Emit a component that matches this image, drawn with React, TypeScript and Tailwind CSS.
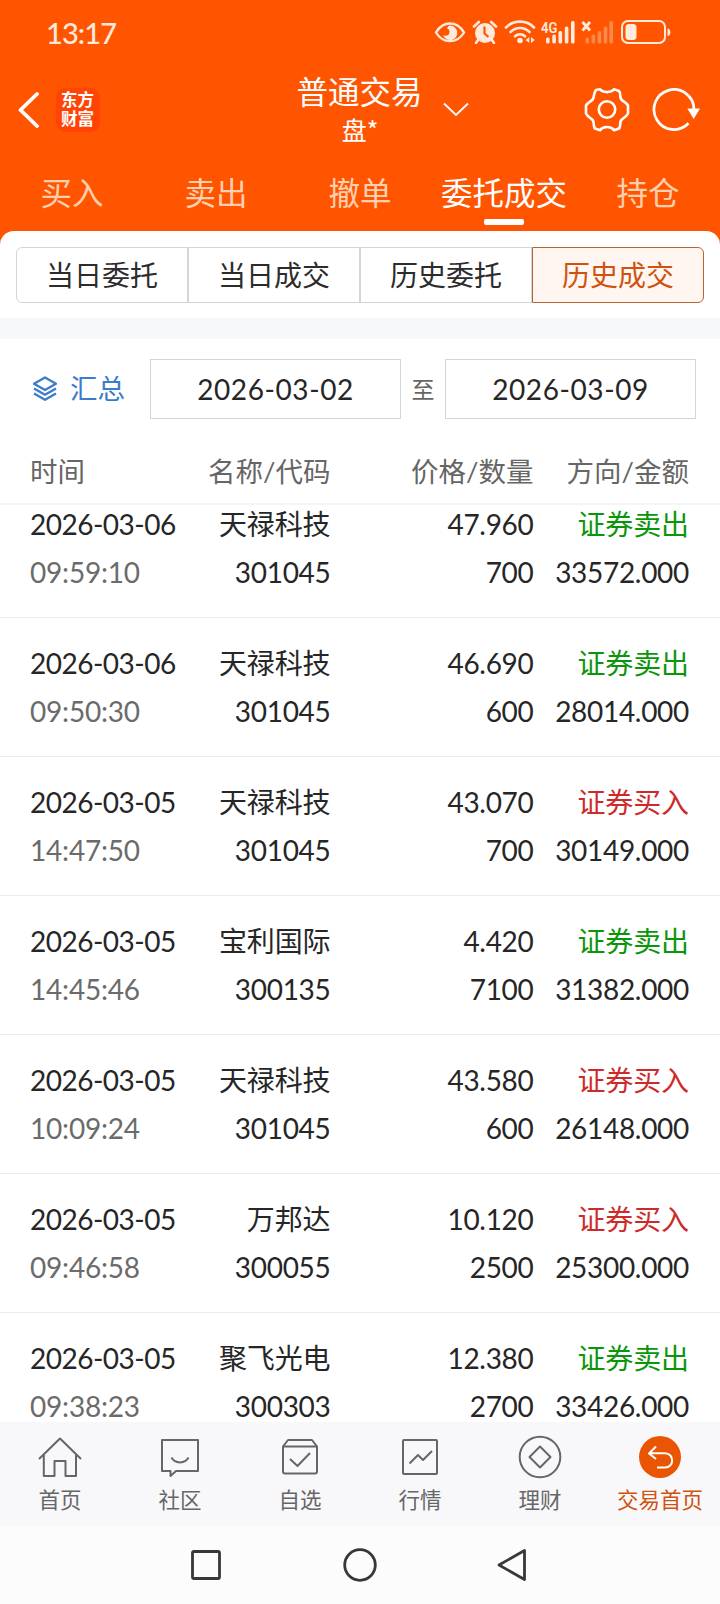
import type { ReactNode } from "react";
import clsx from "clsx";

type Trade = {
  date: string;
  time: string;
  name: string;
  code: string;
  price: string;
  qty: string;
  side: "buy" | "sell";
  amount: string;
};

const trades: Trade[] = [
  { date: "2026-03-06", time: "09:59:10", name: "天禄科技", code: "301045", price: "47.960", qty: "700", side: "sell", amount: "33572.000" },
  { date: "2026-03-06", time: "09:50:30", name: "天禄科技", code: "301045", price: "46.690", qty: "600", side: "sell", amount: "28014.000" },
  { date: "2026-03-05", time: "14:47:50", name: "天禄科技", code: "301045", price: "43.070", qty: "700", side: "buy", amount: "30149.000" },
  { date: "2026-03-05", time: "14:45:46", name: "宝利国际", code: "300135", price: "4.420", qty: "7100", side: "sell", amount: "31382.000" },
  { date: "2026-03-05", time: "10:09:24", name: "天禄科技", code: "301045", price: "43.580", qty: "600", side: "buy", amount: "26148.000" },
  { date: "2026-03-05", time: "09:46:58", name: "万邦达", code: "300055", price: "10.120", qty: "2500", side: "buy", amount: "25300.000" },
  { date: "2026-03-05", time: "09:38:23", name: "聚飞光电", code: "300303", price: "12.380", qty: "2700", side: "sell", amount: "33426.000" },
];

const topTabs = ["买入", "卖出", "撤单", "委托成交", "持仓"];
const segments = ["当日委托", "当日成交", "历史委托", "历史成交"];

export default function App() {
  return (
    <div className="flex h-[1604px] w-[720px] flex-col overflow-hidden bg-white font-['Lato','Noto_Sans_CJK_SC',sans-serif] text-[28px] leading-none text-[#262626]">
      <div className="bg-[#ff5500]">
        <StatusBar />
        <TitleBar />
        <TopTabs active="委托成交" />
        <Segments active="历史成交" />
      </div>

      <div className="h-[21px] shrink-0 bg-[#f7f8fa]" />

      <DateFilter />
      <TableHead />

      {/* 成交列表（第一行已部分滚出） */}
      <div className="min-h-0 flex-1 overflow-hidden">
        <div className="-mt-[26px]">
          {trades.map((t) => (
            <TradeRow key={t.date + t.time} trade={t} />
          ))}
        </div>
      </div>

      <BottomTabs />
      <SystemNav />
    </div>
  );
}

function StatusBar() {
  return (
    <div className="flex h-16 items-center pr-[49px] pl-[46px] text-[#ffeadd]">
      <span className="flex-1 pt-px text-[29px] font-medium tracking-[-0.9px]">13:17</span>

      {/* 护眼 */}
      <svg className="h-6 w-8" viewBox="0 0 32 24" fill="none">
        <path d="M2 12.5C9 .5 23 .5 30 12.5C23 24 9 24 2 12.5Z" stroke="currentColor" strokeWidth="2.4" />
        <path d="M16 5.5a7.3 7.3 0 1 1-7 9.5c3 2 6.5.3 6.5-3c0-2-.8-3-2.5-3.8C13.8 6.5 15 5.7 16 5.5Z" fill="currentColor" />
      </svg>

      {/* 闹钟 */}
      <svg className="ml-[6px] h-6 w-[26px]" viewBox="0 0 26 24" fill="none">
        <circle cx="13" cy="13" r="10" fill="currentColor" />
        <path d="M2 6.5L6.8 2M24 6.5L19.2 2M6 20L4 23M20 20L22 23" stroke="currentColor" strokeWidth="2.6" strokeLinecap="round" />
        <path d="M12.5 6.5V13.5L16.5 17" stroke="#ff5500" strokeWidth="2.2" />
      </svg>

      {/* WiFi */}
      <svg className="ml-[6px] h-6 w-8" viewBox="0 0 32 24" fill="none" stroke="currentColor" strokeWidth="2.6" strokeLinecap="round">
        <path d="M2 7.5C9.5-.3 22.5-.3 30 7.5M6.500 12C12 6.600 20 6.600 25.500 12M11 16.300c3-2.600 7-2.600 10 0" />
        <circle cx="16" cy="20.5" r="2.8" fill="currentColor" stroke="none" />
        <path d="M25.3 17v6l-3.800-3zM27 17v6l3.800-3z" fill="currentColor" stroke="none" />
      </svg>

      {/* 4G 信号 */}
      <svg className="ml-[5px] h-6 w-[34px]" viewBox="0 0 34 24" fill="currentColor">
        <text x="0" y="12.5" fontSize="15.5" fontWeight="600" textLength="16.5" lengthAdjust="spacingAndGlyphs" className="font-['Roboto',sans-serif]">4G</text>
        <rect x="5" y="17.5" width="3.6" height="6" rx="1.5" />
        <rect x="11.3" y="14.5" width="3.6" height="9" rx="1.5" />
        <rect x="17.5" y="11" width="3.6" height="12.5" rx="1.5" />
        <rect x="23.8" y="6.5" width="3.6" height="17" rx="1.5" />
        <rect x="30" y="1" width="3.6" height="22.5" rx="1.5" />
      </svg>

      {/* 无信号 */}
      <svg className="ml-[6px] h-6 w-8" viewBox="0 0 32 24">
        <path d="M1.5 2l7.5 8.5M9 2L1.5 10.5" stroke="currentColor" strokeWidth="2.8" />
        <g fill="currentColor" opacity=".35">
          <rect x="4.5" y="17.5" width="3.6" height="6" rx="1.5" />
          <rect x="10.5" y="14.5" width="3.6" height="9" rx="1.5" />
          <rect x="16.6" y="11" width="3.6" height="12.5" rx="1.5" />
          <rect x="22.7" y="6.5" width="3.6" height="17" rx="1.5" />
          <rect x="28.4" y="1" width="3.6" height="22.5" rx="1.5" />
        </g>
      </svg>

      {/* 电池 */}
      <svg className="ml-[8px] h-6 w-[50px]" viewBox="0 0 50 24" fill="none">
        <rect x="1" y="1" width="43" height="22" rx="6" stroke="currentColor" strokeWidth="2" />
        <rect x="4.5" y="4" width="11" height="16" rx="3.5" fill="currentColor" />
        <path d="M46.5 8.5c3.8 0 3.8 7.5 0 7.5z" fill="currentColor" />
      </svg>
    </div>
  );
}

function TitleBar() {
  return (
    <div className="grid h-[92px] grid-cols-[1fr_auto_1fr] text-white">
      <div className="flex items-center pl-[17px]">
        <svg className="h-[38px] w-[22px]" viewBox="0 0 22 38" fill="none" stroke="currentColor" strokeWidth="3.8" strokeLinecap="round" strokeLinejoin="round">
          <path d="M20 3L3.500 19L20 35" />
        </svg>
        <div className="ml-[17px] flex size-[44px] flex-col items-center justify-center rounded-[9px] bg-[#ff4405] pr-px text-[16.5px] leading-[19.5px] font-bold">
          <span>东方</span>
          <span>财富</span>
        </div>
      </div>

      <div className="relative flex w-32 flex-col items-center pt-[11px]">
        <span className="-ml-px text-[31.5px] leading-[34px] whitespace-nowrap">普通交易</span>
        <span className="mt-[6px] text-[25px] leading-[28px]">
          盘<span className="font-['Noto_Sans_CJK_SC',sans-serif]">*</span>
        </span>
        <svg className="absolute top-[38px] left-[147px] h-[15px] w-[26px]" viewBox="0 0 26 15" fill="none" stroke="currentColor" strokeWidth="1.9">
          <path d="M1 1.500L13 13L25 1.500" />
        </svg>
      </div>

      <div className="flex items-center justify-end pr-[18px]">
        <svg className="h-11 w-[46px]" viewBox="584 87.5 46 44" fill="none" stroke="currentColor" strokeWidth="2.6" strokeLinejoin="round">
          <path d="M596 89.500L600 88.800C603 92.500 611 92.500 614 88.800L619 90.500C621 92 619.500 96 621 98.500C622.500 101 626 101.500 628 105V113C626 117 622.500 117.500 621 120C619.500 122.500 621 126 619 128L614 129.700C611 125.500 603 125.500 600 129.700L595 128C593 126 594.500 122.500 593 120C591.500 117.500 588 117 586 113V105C588 101.500 591.500 101 593 98.500C594.500 96 593.500 92 596 89.500Z" />
          <circle cx="607" cy="109" r="8.2" />
        </svg>
        <svg className="ml-[22px] h-11 w-[50px]" viewBox="652 88 50 44" fill="none" stroke="currentColor" strokeWidth="2.7">
          <path d="M688.500 123.300A20 20 0 1 1 694 109" />
          <path d="M687.300 108.500H700L693.700 119Z" fill="currentColor" stroke="none" />
        </svg>
      </div>
    </div>
  );
}

function TopTabs({ active }: { active: string }) {
  return (
    <div className="grid h-[75px] grid-cols-5 text-[31.5px]">
      {topTabs.map((tab) => (
        <div
          key={tab}
          className={clsx(
            "flex flex-col items-center pt-[20px] whitespace-nowrap",
            tab === active ? "text-white" : "text-[#ffd0b0]"
          )}
        >
          <span className="leading-[34px]">{tab}</span>
          {tab === active && <span className="mt-[9px] h-[6px] w-10 rounded-[2px] bg-white" />}
        </div>
      ))}
    </div>
  );
}

function Segments({ active }: { active: string }) {
  return (
    <div className="h-[87px] rounded-t-[14px] bg-white px-4 pt-4">
      <div className="flex h-14">
        {segments.map((label) => (
          <div
            key={label}
            className={clsx(
              "flex flex-1 items-center justify-center border first:rounded-l-[6px] last:rounded-r-[6px]",
              label === active
                ? "border-[#b5652f] bg-[#fff5f1] text-[#cf5310]"
                : "border-[#d3d6d8] text-[#2c2c2c]"
            )}
          >
            {label}
          </div>
        ))}
      </div>
    </div>
  );
}

function DateFilter() {
  return (
    <div className="flex h-[100px] shrink-0 items-center pr-6 pl-[33px]">
      <svg className="h-[26px] w-6" viewBox="0 0 24 26" fill="none" stroke="#3d7cc9" strokeWidth="2.3" strokeLinejoin="round">
        <path d="M12 1.500L23 7.700L12 14L1 7.700Z" />
        <path d="M1 12.500L12 18.700L23 12.500M1 17.500L12 23.800L23 17.500" />
      </svg>
      <span className="ml-[13px] w-[80px] text-[27.5px] text-[#3d7cc9]">汇总</span>
      <DateBox value="2026-03-02" />
      <span className="flex-1 text-center text-[23px] text-[#666]">至</span>
      <DateBox value="2026-03-09" />
    </div>
  );
}

function DateBox({ value }: { value: string }) {
  return (
    <div className="flex h-[60px] w-[251px] items-center justify-center border border-[#d3d6d8] tracking-[0.6px]">
      {value}
    </div>
  );
}

const columns = "grid grid-cols-[150.5px_150px_203px_155.5px] pl-[30px]";

function TableHead() {
  return (
    <div className={clsx(columns, "h-[66px] shrink-0 border-b-2 border-[#f5f5f6] pt-[19px] text-right text-[27.5px] text-[#666]")}>
      <span className="text-left">时间</span>
      <span>名称/代码</span>
      <span>价格/数量</span>
      <span>方向/金额</span>
    </div>
  );
}

function TradeRow({ trade }: { trade: Trade }) {
  return (
    <div className={clsx(columns, "h-[139px] grid-rows-[28px_28px] gap-y-5 border-b border-[#ebebeb] pt-[31px] text-right leading-[28px] tracking-[-0.3px] whitespace-nowrap")}>
      <span className="text-left tracking-[-0.5px]">{trade.date}</span>
      <span className="tracking-[-0.1px]">{trade.name}</span>
      <span>{trade.price}</span>
      <span className={clsx("tracking-[-0.1px]", trade.side === "sell" ? "text-[#0b950b]" : "text-[#cf2a2a]")}>
        {trade.side === "sell" ? "证券卖出" : "证券买入"}
      </span>
      <span className="text-left tracking-[-0.2px] text-[#6b6b6b]">{trade.time}</span>
      <span>{trade.code}</span>
      <span>{trade.qty}</span>
      <span>{trade.amount}</span>
    </div>
  );
}

function BottomTabs() {
  return (
    <div className="grid h-[104px] shrink-0 grid-cols-6 bg-[#f8f8fb] text-[#666]">
      <BottomTab label="首页">
        <path d="M2 24L23 3.500L44 24M6.800 20V41H17.500V26H28.500V41H39V20" />
      </BottomTab>
      <BottomTab label="社区">
        <path d="M5 5H41V36H19L13.500 41V36H5Z" />
        <path d="M14.500 22.500C18 29 28 29 31.500 22.500" />
      </BottomTab>
      <BottomTab label="自选">
        <path d="M6 11.500L11 5H35L40 11.500M6 11.500H40V36.500a2 2 0 0 1-2 2H8a2 2 0 0 1-2-2Z" />
        <path d="M13 24L20.500 31L33 18" />
      </BottomTab>
      <BottomTab label="行情">
        <rect x="6" y="5" width="34" height="34" rx="1" />
        <path d="M12.500 28.500L21 20L26 25L35 16" />
      </BottomTab>
      <BottomTab label="理财">
        <circle cx="23" cy="22" r="20.3" />
        <path d="M23 11.500L33.500 22L23 32.500L12.500 22Z" />
      </BottomTab>
      <BottomTab label="交易首页" active>
        <circle cx="23" cy="22" r="21" fill="#ea5504" stroke="none" />
        <path d="M19 11.500L12 18.500L19 24M12 18.300H28C37.500 18.300 37.500 32.500 28 32.500H20" stroke="#fff" strokeWidth="2" />
      </BottomTab>
    </div>
  );
}

function BottomTab({ label, active, children }: { label: string; active?: boolean; children: ReactNode }) {
  return (
    <div className={clsx("flex flex-col items-center pt-[13px] text-[21.5px] whitespace-nowrap", active && "text-[#cf5310]")}>
      <svg className="h-11 w-[46px]" viewBox="0 0 46 44" fill="none" stroke="currentColor" strokeWidth="2" strokeLinejoin="round">
        {children}
      </svg>
      <span className="mt-[8px] leading-[26px]">{label}</span>
    </div>
  );
}

// 系统导航键
function SystemNav() {
  return (
    <div className="flex h-[78px] shrink-0 items-center justify-center gap-[119px] bg-[#fcfcfc] text-[#383838]">
      <svg className="size-[34px]" viewBox="0 0 34 34" fill="none" stroke="currentColor" strokeWidth="2.8">
        <rect x="3.5" y="3.5" width="27" height="27" rx="1.5" />
      </svg>
      <svg className="size-[36px]" viewBox="0 0 36 36" fill="none" stroke="currentColor" strokeWidth="2.8">
        <circle cx="18" cy="18" r="15.3" />
      </svg>
      <svg className="size-[34px]" viewBox="0 0 34 34" fill="none" stroke="currentColor" strokeWidth="2.8" strokeLinejoin="round">
        <path d="M27.500 2.500V31.500L2 17Z" />
      </svg>
    </div>
  );
}
